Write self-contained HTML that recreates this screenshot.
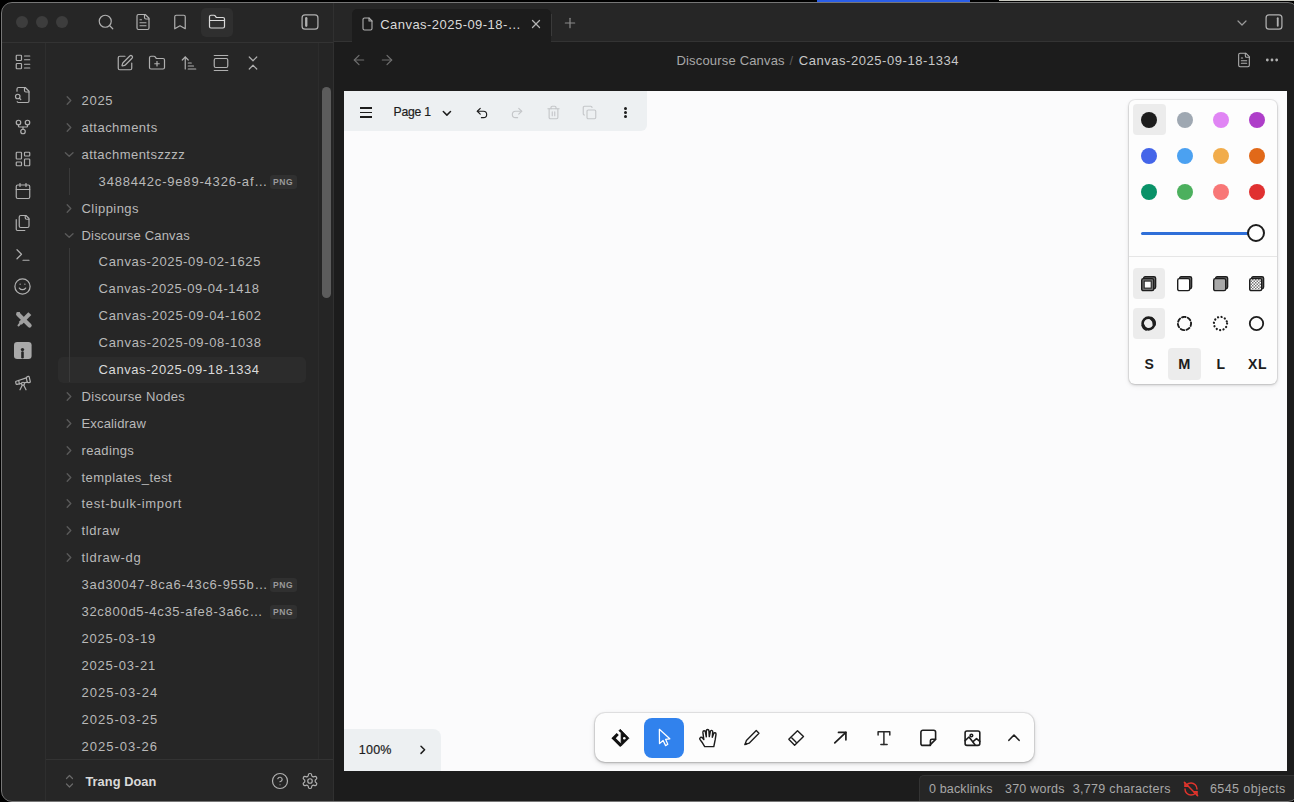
<!DOCTYPE html>
<html><head><meta charset="utf-8">
<style>
*{box-sizing:border-box;margin:0;padding:0}
html,body{width:1294px;height:802px;overflow:hidden;background:#000;font-family:"Liberation Sans",sans-serif}
.abs{position:absolute}
.t{white-space:nowrap;line-height:normal}
svg{display:block;overflow:visible}
#win{position:absolute;left:2px;top:3px;width:1296px;height:798px;border-radius:10px;overflow:hidden;background:#262626}
#frame{position:absolute;left:1px;top:2px;width:1298px;height:800px;border-radius:11px;border:1px solid #767676;pointer-events:none}
.tag{height:14px;width:27px;border-radius:3px;background:#303030;color:#9a9a9a;font-size:8.5px;font-weight:700;line-height:14px;text-align:center;letter-spacing:0.6px}
</style></head><body>
<div class="abs" style="left:817px;top:0;width:153px;height:1.6px;background:#2a5ee8"></div>
<div class="abs" style="left:999px;top:0;width:295px;height:1px;background:#c9c9c0"></div>
<div id="win">
  <div class="abs" style="left:-2px;top:-3px;width:1310px;height:830px">
  <!-- ribbon + sidebar bg -->
  <div class="abs" style="left:0;top:0;width:333px;height:830px;background:#262626"></div>
  <div class="abs" style="left:45px;top:42px;width:1px;height:790px;background:#2e2e2e"></div>
  <div class="abs" style="left:0;top:42px;width:333px;height:1px;background:#333333"></div>
  <div class="abs" style="left:333px;top:0;width:1px;height:830px;background:#303030"></div>
  <!-- scrollbar -->
  <div class="abs" style="left:318px;top:43px;width:15px;height:716px;background:#252525;border-left:1px solid #2c2c2c"></div>
  <div class="abs" style="left:322px;top:86.5px;width:8.5px;height:211.5px;border-radius:4.5px;background:#5c5c5c"></div>
  <!-- profile separator -->
  <div class="abs" style="left:46px;top:759px;width:287px;height:1px;background:#333333"></div>
  <!-- tab bar -->
  <div class="abs" style="left:334px;top:0;width:980px;height:41px;background:#262626"></div>
  <div class="abs" style="left:334px;top:41px;width:980px;height:1px;background:#333333"></div>
  <div class="abs" style="left:352px;top:9px;width:199px;height:33px;border-radius:5px 5px 0 0;background:#1c1c1c"></div>
  <div class="abs" style="left:551px;top:14px;width:1px;height:22px;background:#3a3a3a"></div>
  <!-- main view -->
  <div class="abs" style="left:334px;top:42px;width:980px;height:790px;background:#1c1c1c"></div>
  <!-- canvas -->
  <div class="abs" style="left:344px;top:91px;width:943px;height:680px;background:#fbfbfc;overflow:hidden">
     
  </div>
  <!-- status bar -->
  <div class="abs" style="left:919px;top:775px;width:400px;height:40px;background:#262626;border-radius:5px 0 0 0;border-top:1px solid #333;border-left:1px solid #333"></div>
  </div>
</div>
<div class="abs" style="left:0;top:0;width:1294px;height:802px">
<div class="abs" style="left:16.3px;top:16.3px;width:12px;height:12px;border-radius:50%;background:#3d3d3d"></div>
<div class="abs" style="left:36.0px;top:16.3px;width:12px;height:12px;border-radius:50%;background:#3d3d3d"></div>
<div class="abs" style="left:56.0px;top:16.3px;width:12px;height:12px;border-radius:50%;background:#3d3d3d"></div>
<div class="abs" style="left:201px;top:7.5px;width:32px;height:29.5px;border-radius:5px;background:#2f2f2f"></div>
<svg class="abs" style="left:97.00px;top:13.20px" width="18" height="18" viewBox="0 0 24 24" fill="none" stroke="#b0b0b0" stroke-width="1.6" stroke-linecap="round" stroke-linejoin="round" ><circle cx="11" cy="11" r="8"/><path d="m21 21-4.3-4.3"/></svg>
<svg class="abs" style="left:134.30px;top:13.20px" width="18" height="18" viewBox="0 0 24 24" fill="none" stroke="#b0b0b0" stroke-width="1.6" stroke-linecap="round" stroke-linejoin="round" ><path d="M15 2H6a2 2 0 0 0-2 2v16a2 2 0 0 0 2 2h12a2 2 0 0 0 2-2V7Z"/><path d="M14 2v4a2 2 0 0 0 2 2h4"/><path d="M10 9H8"/><path d="M16 13H8"/><path d="M16 17H8"/></svg>
<svg class="abs" style="left:171.00px;top:13.20px" width="18" height="18" viewBox="0 0 24 24" fill="none" stroke="#b0b0b0" stroke-width="1.6" stroke-linecap="round" stroke-linejoin="round" ><path d="m19 21-7-4-7 4V5a2 2 0 0 1 2-2h10a2 2 0 0 1 2 2v16z"/></svg>
<svg class="abs" style="left:208.00px;top:13.20px" width="18" height="18" viewBox="0 0 24 24" fill="none" stroke="#dadada" stroke-width="1.6" stroke-linecap="round" stroke-linejoin="round" ><path d="M20 20a2 2 0 0 0 2-2V8a2 2 0 0 0-2-2h-7.9a2 2 0 0 1-1.69-.9L9.6 3.9A2 2 0 0 0 7.93 3H4a2 2 0 0 0-2 2v13a2 2 0 0 0 2 2Z"/><path d="M2 10h20"/></svg>
<svg class="abs" style="left:299.80px;top:12.10px" width="20" height="20" viewBox="0 0 24 24" fill="none" stroke="#b0b0b0" stroke-width="1.5" stroke-linecap="round" stroke-linejoin="round" ><rect width="19" height="17" x="2.5" y="3.5" rx="3.5"/><path d="M7.5 7.5v9" stroke-width="2.8"/></svg>
<svg class="abs" style="left:14.00px;top:53.30px" width="18" height="18" viewBox="0 0 24 24" fill="none" stroke="#b0b0b0" stroke-width="1.6" stroke-linecap="round" stroke-linejoin="round" ><rect width="7" height="7" x="3" y="3" rx="1"/><rect width="7" height="7" x="3" y="14" rx="1"/><path d="M14 4h7"/><path d="M14 9h7"/><path d="M14 15h7"/><path d="M14 20h7"/></svg>
<svg class="abs" style="left:14.00px;top:85.50px" width="18" height="18" viewBox="0 0 24 24" fill="none" stroke="#b0b0b0" stroke-width="1.6" stroke-linecap="round" stroke-linejoin="round" ><path d="M14 2v4a2 2 0 0 0 2 2h4"/><path d="M4.268 21a2 2 0 0 0 1.727 1H18a2 2 0 0 0 2-2V7l-5-5H6a2 2 0 0 0-2 2v3"/><path d="m9 18-1.5-1.5"/><circle cx="5" cy="14" r="3"/></svg>
<svg class="abs" style="left:14.00px;top:117.80px" width="18" height="18" viewBox="0 0 24 24" fill="none" stroke="#b0b0b0" stroke-width="1.6" stroke-linecap="round" stroke-linejoin="round" ><circle cx="12" cy="18" r="3"/><circle cx="6" cy="6" r="3"/><circle cx="18" cy="6" r="3"/><path d="M18 9v2c0 .6-.4 1-1 1H7c-.6 0-1-.4-1-1V9"/><path d="M12 12v3"/></svg>
<svg class="abs" style="left:14.00px;top:149.50px" width="18" height="18" viewBox="0 0 24 24" fill="none" stroke="#b0b0b0" stroke-width="1.6" stroke-linecap="round" stroke-linejoin="round" ><rect width="7" height="9" x="3" y="3" rx="1"/><rect width="7" height="5" x="14" y="3" rx="1"/><rect width="7" height="9" x="14" y="12" rx="1"/><rect width="7" height="5" x="3" y="16" rx="1"/></svg>
<svg class="abs" style="left:14.00px;top:181.50px" width="18" height="18" viewBox="0 0 24 24" fill="none" stroke="#b0b0b0" stroke-width="1.6" stroke-linecap="round" stroke-linejoin="round" ><path d="M8 2v4"/><path d="M16 2v4"/><rect width="18" height="18" x="3" y="4" rx="2"/><path d="M3 10h18"/></svg>
<svg class="abs" style="left:14.00px;top:213.80px" width="18" height="18" viewBox="0 0 24 24" fill="none" stroke="#b0b0b0" stroke-width="1.6" stroke-linecap="round" stroke-linejoin="round" ><path d="M20 7h-3a2 2 0 0 1-2-2V2"/><path d="M9 18a2 2 0 0 1-2-2V4a2 2 0 0 1 2-2h7l4 4v10a2 2 0 0 1-2 2Z"/><path d="M3 7.6v12.8A1.6 1.6 0 0 0 4.6 22h9.8"/></svg>
<svg class="abs" style="left:14.00px;top:246.00px" width="18" height="18" viewBox="0 0 24 24" fill="none" stroke="#b0b0b0" stroke-width="1.6" stroke-linecap="round" stroke-linejoin="round" ><polyline points="4 17 10 11 4 5"/><line x1="12" x2="20" y1="19" y2="19"/></svg>
<svg class="abs" style="left:13.40px;top:277.10px" width="19" height="19" viewBox="0 0 24 24" fill="none" stroke="#b0b0b0" stroke-width="1.6" stroke-linecap="round" stroke-linejoin="round" ><circle cx="12" cy="12" r="9.6"/><path d="M8 14s1.5 2 4 2 4-2 4-2"/><path d="M9 9h.01"/><path d="M15 9h.01"/></svg>
<svg class="abs" style="left:10px;top:306px" width="26" height="26" viewBox="0 0 26 26"><path d="M8.2 8.2 L19.6 19.6" stroke="#a0a0a0" stroke-width="4.2" stroke-linecap="round"/><path d="M19.8 7.6 L10.2 17.4" stroke="#a0a0a0" stroke-width="4.2" stroke-linecap="butt"/><path d="M8.6 19.4 L10.6 17" stroke="#a0a0a0" stroke-width="2.2" stroke-linecap="round"/><path d="M6.6 7.0 L9.2 6.8 L9.6 9.6" fill="none" stroke="#a0a0a0" stroke-width="1.6"/></svg>
<svg class="abs" style="left:14.3px;top:342.1px" width="17.6" height="17" viewBox="0 0 17.6 17"><rect width="17.6" height="17" rx="3.2" fill="#a9a9a9"/><circle cx="8.5" cy="7.6" r="1.7" fill="#262626"/><path d="M8.5 10.6 V15.2" stroke="#262626" stroke-width="2.6" stroke-linecap="round"/></svg>
<svg class="abs" style="left:14.00px;top:374.00px" width="18" height="18" viewBox="0 0 24 24" fill="none" stroke="#b0b0b0" stroke-width="1.6" stroke-linecap="round" stroke-linejoin="round" ><path d="m10.065 12.493-6.18 1.318a.934.934 0 0 1-1.108-.702l-.537-2.15a1.07 1.07 0 0 1 .691-1.265l13.504-4.44"/><path d="m13.56 11.747 4.332-.924"/><path d="m16 21-3.105-6.21"/><path d="M16.485 5.94a2 2 0 0 1 1.455-2.425l1.09-.272a1 1 0 0 1 1.212.727l1.515 6.06a1 1 0 0 1-.727 1.213l-1.09.272a2 2 0 0 1-2.425-1.455z"/><path d="m6.158 8.633 1.114 4.456"/><path d="m8 21 3.105-6.21"/><circle cx="12" cy="13" r="2"/></svg>
<svg class="abs" style="left:116.40px;top:53.60px" width="18" height="18" viewBox="0 0 24 24" fill="none" stroke="#b0b0b0" stroke-width="1.6" stroke-linecap="round" stroke-linejoin="round" ><path d="M12 3H5a2 2 0 0 0-2 2v14a2 2 0 0 0 2 2h14a2 2 0 0 0 2-2v-7"/><path d="M18.375 2.625a1 1 0 0 1 3 3l-9.013 9.014a2 2 0 0 1-.853.505l-2.873.84a.5.5 0 0 1-.62-.62l.84-2.873a2 2 0 0 1 .506-.852z"/></svg>
<svg class="abs" style="left:148.20px;top:53.60px" width="18" height="18" viewBox="0 0 24 24" fill="none" stroke="#b0b0b0" stroke-width="1.6" stroke-linecap="round" stroke-linejoin="round" ><path d="M12 10v6"/><path d="M9 13h6"/><path d="M20 20a2 2 0 0 0 2-2V8a2 2 0 0 0-2-2h-7.9a2 2 0 0 1-1.69-.9L9.6 3.9A2 2 0 0 0 7.93 3H4a2 2 0 0 0-2 2v13a2 2 0 0 0 2 2Z"/></svg>
<svg class="abs" style="left:180.00px;top:53.60px" width="18" height="18" viewBox="0 0 24 24" fill="none" stroke="#b0b0b0" stroke-width="1.6" stroke-linecap="round" stroke-linejoin="round" ><path d="m3 8 4-4 4 4"/><path d="M7 4v16"/><path d="M11 12h4"/><path d="M11 16h7"/><path d="M11 20h10"/></svg>
<svg class="abs" style="left:212.00px;top:53.60px" width="18" height="18" viewBox="0 0 24 24" fill="none" stroke="#b0b0b0" stroke-width="1.6" stroke-linecap="round" stroke-linejoin="round" ><path d="M3 2h18"/><rect width="18" height="12" x="3" y="6" rx="2"/><path d="M3 22h18"/></svg>
<svg class="abs" style="left:244.20px;top:53.60px" width="18" height="18" viewBox="0 0 24 24" fill="none" stroke="#b0b0b0" stroke-width="1.6" stroke-linecap="round" stroke-linejoin="round" ><path d="m7 20 5-5 5 5"/><path d="m7 4 5 5 5-5"/></svg>
<div class="abs" style="left:58px;top:357.3px;width:247.5px;height:26px;border-radius:5px;background:#2c2c2c"></div>
<svg class="abs" style="left:0;top:0" width="120" height="802"><path d="M67.2 96.7 l3.6 3.8 l-3.6 3.8" fill="none" stroke="#5a5a5a" stroke-width="1.4" stroke-linecap="round" stroke-linejoin="round"/></svg>
<svg class="abs" style="left:0;top:0" width="120" height="802"><path d="M67.2 123.7 l3.6 3.8 l-3.6 3.8" fill="none" stroke="#5a5a5a" stroke-width="1.4" stroke-linecap="round" stroke-linejoin="round"/></svg>
<svg class="abs" style="left:0;top:0" width="120" height="802"><path d="M65.4 152.7 l3.8 3.6 l3.8 -3.6" fill="none" stroke="#5a5a5a" stroke-width="1.4" stroke-linecap="round" stroke-linejoin="round"/></svg>
<div class="abs tag" style="left:269.5px;top:174.5px">PNG</div>
<svg class="abs" style="left:0;top:0" width="120" height="802"><path d="M67.2 204.7 l3.6 3.8 l-3.6 3.8" fill="none" stroke="#5a5a5a" stroke-width="1.4" stroke-linecap="round" stroke-linejoin="round"/></svg>
<svg class="abs" style="left:0;top:0" width="120" height="802"><path d="M65.4 233.7 l3.8 3.6 l3.8 -3.6" fill="none" stroke="#5a5a5a" stroke-width="1.4" stroke-linecap="round" stroke-linejoin="round"/></svg>
<svg class="abs" style="left:0;top:0" width="120" height="802"><path d="M67.2 392.7 l3.6 3.8 l-3.6 3.8" fill="none" stroke="#5a5a5a" stroke-width="1.4" stroke-linecap="round" stroke-linejoin="round"/></svg>
<svg class="abs" style="left:0;top:0" width="120" height="802"><path d="M67.2 419.7 l3.6 3.8 l-3.6 3.8" fill="none" stroke="#5a5a5a" stroke-width="1.4" stroke-linecap="round" stroke-linejoin="round"/></svg>
<svg class="abs" style="left:0;top:0" width="120" height="802"><path d="M67.2 446.7 l3.6 3.8 l-3.6 3.8" fill="none" stroke="#5a5a5a" stroke-width="1.4" stroke-linecap="round" stroke-linejoin="round"/></svg>
<svg class="abs" style="left:0;top:0" width="120" height="802"><path d="M67.2 473.7 l3.6 3.8 l-3.6 3.8" fill="none" stroke="#5a5a5a" stroke-width="1.4" stroke-linecap="round" stroke-linejoin="round"/></svg>
<svg class="abs" style="left:0;top:0" width="120" height="802"><path d="M67.2 499.7 l3.6 3.8 l-3.6 3.8" fill="none" stroke="#5a5a5a" stroke-width="1.4" stroke-linecap="round" stroke-linejoin="round"/></svg>
<svg class="abs" style="left:0;top:0" width="120" height="802"><path d="M67.2 526.7 l3.6 3.8 l-3.6 3.8" fill="none" stroke="#5a5a5a" stroke-width="1.4" stroke-linecap="round" stroke-linejoin="round"/></svg>
<svg class="abs" style="left:0;top:0" width="120" height="802"><path d="M67.2 553.7 l3.6 3.8 l-3.6 3.8" fill="none" stroke="#5a5a5a" stroke-width="1.4" stroke-linecap="round" stroke-linejoin="round"/></svg>
<div class="abs tag" style="left:269.5px;top:577.5px">PNG</div>
<div class="abs tag" style="left:269.5px;top:604.5px">PNG</div>
<div class="abs" style="left:69px;top:168px;width:1px;height:27px;background:#3a3a3a"></div>
<div class="abs" style="left:69px;top:248px;width:1px;height:134px;background:#3a3a3a"></div>
<svg class="abs" style="left:361.50px;top:17.00px" width="11" height="11" viewBox="0 0 11 11" fill="none" stroke="#b0b0b0" stroke-width="1.1" stroke-linecap="round" stroke-linejoin="round" ><path d="M7 1H2.5a1.5 1.5 0 0 0-1.5 1.5v9a1.5 1.5 0 0 0 1.5 1.5h6a1.5 1.5 0 0 0 1.5-1.5V4Z"/><path d="M7 1v3h3"/></svg>
<svg class="abs" style="left:528.50px;top:17.00px" width="14" height="14" viewBox="0 0 24 24" fill="none" stroke="#b3b3b3" stroke-width="2.2" stroke-linecap="round" stroke-linejoin="round" ><path d="M18 6 6 18"/><path d="m6 6 12 12"/></svg>
<svg class="abs" style="left:562.00px;top:15.00px" width="16" height="16" viewBox="0 0 24 24" fill="none" stroke="#8a8a8a" stroke-width="1.8" stroke-linecap="round" stroke-linejoin="round" ><path d="M5 12h14"/><path d="M12 5v14"/></svg>
<svg class="abs" style="left:1234.00px;top:14.50px" width="16" height="16" viewBox="0 0 24 24" fill="none" stroke="#9a9a9a" stroke-width="1.8" stroke-linecap="round" stroke-linejoin="round" ><path d="m6 9 6 6 6-6"/></svg>
<svg class="abs" style="left:1264.00px;top:12.00px" width="20" height="20" viewBox="0 0 24 24" fill="none" stroke="#b0b0b0" stroke-width="1.5" stroke-linecap="round" stroke-linejoin="round" ><rect width="19" height="17" x="2.5" y="3.5" rx="3.5"/><path d="M16.5 7.5v9" stroke-width="2.2"/></svg>
<svg class="abs" style="left:351.30px;top:52.30px" width="16" height="16" viewBox="0 0 24 24" fill="none" stroke="#6f6f6f" stroke-width="1.8" stroke-linecap="round" stroke-linejoin="round" ><path d="m12 19-7-7 7-7"/><path d="M19 12H5"/></svg>
<svg class="abs" style="left:379.20px;top:52.30px" width="16" height="16" viewBox="0 0 24 24" fill="none" stroke="#6f6f6f" stroke-width="1.8" stroke-linecap="round" stroke-linejoin="round" ><path d="M5 12h14"/><path d="m12 5 7 7-7 7"/></svg>
<svg class="abs" style="left:1236.00px;top:52.30px" width="16" height="16" viewBox="0 0 24 24" fill="none" stroke="#b0b0b0" stroke-width="1.6" stroke-linecap="round" stroke-linejoin="round" ><path d="M15 2H6a2 2 0 0 0-2 2v16a2 2 0 0 0 2 2h12a2 2 0 0 0 2-2V7Z"/><path d="M14 2v4a2 2 0 0 0 2 2h4"/><path d="M10 9H8"/><path d="M16 13H8"/><path d="M16 17H8"/></svg>
<svg class="abs" style="left:1264.00px;top:52.30px" width="16" height="16" viewBox="0 0 24 24" fill="none" stroke="#b0b0b0" stroke-width="2.2" stroke-linecap="round" stroke-linejoin="round" ><circle cx="12" cy="12" r="1"/><circle cx="19" cy="12" r="1"/><circle cx="5" cy="12" r="1"/></svg>
<svg class="abs" style="left:1182.50px;top:780.50px" width="16" height="16" viewBox="0 0 24 24" fill="none" stroke="#e0342c" stroke-width="2.2" stroke-linecap="round" stroke-linejoin="round" ><path d="M21 12a9 9 0 0 0-9-9 9.75 9.75 0 0 0-6.74 2.74L3 8"/><path d="M3 3v5h5"/><path d="M3 12a9 9 0 0 0 9 9 9.75 9.75 0 0 0 6.74-2.74L21 16"/><path d="M16 16h5v5"/><path d="M2 2l20 20"/></svg>
<svg class="abs" style="left:63.50px;top:773.50px" width="11"  fill="none" stroke="#6a6a6a" stroke-width="1.2" stroke-linecap="round" stroke-linejoin="round" height="15" viewBox="0 0 11 15"><path d="M2.5 4.5 L5.5 1.5 L8.5 4.5"/><path d="M2.5 10 L5.5 13 L8.5 10"/></svg>
<svg class="abs" style="left:270.80px;top:772.30px" width="18" height="18" viewBox="0 0 24 24" fill="none" stroke="#b0b0b0" stroke-width="1.6" stroke-linecap="round" stroke-linejoin="round" ><circle cx="12" cy="12" r="10"/><path d="M9.09 9a3 3 0 0 1 5.83 1c0 2-3 3-3 3"/><path d="M12 17h.01"/></svg>
<svg class="abs" style="left:301.00px;top:772.30px" width="18" height="18" viewBox="0 0 24 24" fill="none" stroke="#b0b0b0" stroke-width="1.6" stroke-linecap="round" stroke-linejoin="round" ><path d="M12.22 2h-.44a2 2 0 0 0-2 2v.18a2 2 0 0 1-1 1.73l-.43.25a2 2 0 0 1-2 0l-.15-.08a2 2 0 0 0-2.73.73l-.22.38a2 2 0 0 0 .73 2.73l.15.1a2 2 0 0 1 1 1.72v.51a2 2 0 0 1-1 1.74l-.15.09a2 2 0 0 0-.73 2.73l.22.38a2 2 0 0 0 2.73.73l.15-.08a2 2 0 0 1 2 0l.43.25a2 2 0 0 1 1 1.73V20a2 2 0 0 0 2 2h.44a2 2 0 0 0 2-2v-.18a2 2 0 0 1 1-1.73l.43-.25a2 2 0 0 1 2 0l.15.08a2 2 0 0 0 2.73-.73l.22-.39a2 2 0 0 0-.73-2.73l-.15-.08a2 2 0 0 1-1-1.74v-.5a2 2 0 0 1 1-1.74l.15-.09a2 2 0 0 0 .73-2.73l-.22-.38a2 2 0 0 0-2.73-.73l-.15.08a2 2 0 0 1-2 0l-.43-.25a2 2 0 0 1-1-1.73V4a2 2 0 0 0-2-2z"/><circle cx="12" cy="12" r="3"/></svg>
<div class="abs" style="left:344px;top:91px;width:302.5px;height:40px;background:#edf0f2;border-radius:0 0 6px 0"></div>
<div class="abs" style="left:360px;top:107.3px;width:11.8px;height:1.5px;background:#1d1d1d"></div>
<div class="abs" style="left:360px;top:111.7px;width:11.8px;height:1.5px;background:#1d1d1d"></div>
<div class="abs" style="left:360px;top:116.1px;width:11.8px;height:1.5px;background:#1d1d1d"></div>
<svg class="abs" style="left:442.00px;top:109.80px" width="10" height="10" viewBox="0 0 10 10" fill="none" stroke="#1d1d1d" stroke-width="1.5" stroke-linecap="round" stroke-linejoin="round" ><path d="M1.3 1.5 L4.9 5.1 L8.5 1.5"/></svg>
<svg class="abs" style="left:474.80px;top:105.60px" width="14" height="14" viewBox="0 0 24 24" fill="none" stroke="#1d1d1d" stroke-width="2" stroke-linecap="round" stroke-linejoin="round" ><path d="M9 14 4 9l5-5"/><path d="M4 9h10.5a5.5 5.5 0 0 1 5.5 5.5a5.5 5.5 0 0 1-5.5 5.5H11"/></svg>
<svg class="abs" style="left:510.40px;top:105.60px" width="14" height="14" viewBox="0 0 24 24" fill="none" stroke="#c4c6c9" stroke-width="2" stroke-linecap="round" stroke-linejoin="round" ><path d="m15 14 5-5-5-5"/><path d="M20 9H9.5A5.5 5.5 0 0 0 4 14.5A5.5 5.5 0 0 0 9.5 20H13"/></svg>
<svg class="abs" style="left:546.20px;top:105.10px" width="15" height="15" viewBox="0 0 24 24" fill="none" stroke="#c4c6c9" stroke-width="1.8" stroke-linecap="round" stroke-linejoin="round" ><path d="M3 6h18"/><path d="M19 6v14c0 1-1 2-2 2H7c-1 0-2-1-2-2V6"/><path d="M8 6V4c0-1 1-2 2-2h4c1 0 2 1 2 2v2"/><line x1="10" x2="10" y1="11" y2="17"/><line x1="14" x2="14" y1="11" y2="17"/></svg>
<svg class="abs" style="left:582.00px;top:105.10px" width="15" height="15" viewBox="0 0 24 24" fill="none" stroke="#c4c6c9" stroke-width="1.8" stroke-linecap="round" stroke-linejoin="round" ><rect width="14" height="14" x="8" y="8" rx="2" ry="2"/><path d="M4 16c-1.1 0-2-.9-2-2V4c0-1.1.9-2 2-2h10c1.1 0 2 .9 2 2"/></svg>
<div class="abs" style="left:624.0px;top:107.0px;width:3px;height:3px;border-radius:50%;background:#1d1d1d"></div>
<div class="abs" style="left:624.0px;top:111.2px;width:3px;height:3px;border-radius:50%;background:#1d1d1d"></div>
<div class="abs" style="left:624.0px;top:115.4px;width:3px;height:3px;border-radius:50%;background:#1d1d1d"></div>
<div class="abs" style="left:1128.7px;top:99.5px;width:148.8px;height:284.4px;background:#fdfdfd;border-radius:6px;box-shadow:0 0 0 1px rgba(0,0,0,0.06),0 1px 3px rgba(0,0,0,0.18),0 2px 6px rgba(0,0,0,0.06)"></div>
<div class="abs" style="left:1133px;top:104.3px;width:32.5px;height:31px;border-radius:4px;background:#ececec"></div>
<div class="abs" style="left:1141.1px;top:111.9px;width:16px;height:16px;border-radius:50%;background:#1d1d1d"></div>
<div class="abs" style="left:1177.1px;top:111.9px;width:16px;height:16px;border-radius:50%;background:#9fa8b2"></div>
<div class="abs" style="left:1213.1px;top:111.9px;width:16px;height:16px;border-radius:50%;background:#e085f4"></div>
<div class="abs" style="left:1249.1px;top:111.9px;width:16px;height:16px;border-radius:50%;background:#ae3ec9"></div>
<div class="abs" style="left:1141.1px;top:147.9px;width:16px;height:16px;border-radius:50%;background:#4465e9"></div>
<div class="abs" style="left:1177.1px;top:147.9px;width:16px;height:16px;border-radius:50%;background:#4ba1f1"></div>
<div class="abs" style="left:1213.1px;top:147.9px;width:16px;height:16px;border-radius:50%;background:#f1ac4b"></div>
<div class="abs" style="left:1249.1px;top:147.9px;width:16px;height:16px;border-radius:50%;background:#e16919"></div>
<div class="abs" style="left:1141.1px;top:183.9px;width:16px;height:16px;border-radius:50%;background:#099268"></div>
<div class="abs" style="left:1177.1px;top:183.9px;width:16px;height:16px;border-radius:50%;background:#4cb05e"></div>
<div class="abs" style="left:1213.1px;top:183.9px;width:16px;height:16px;border-radius:50%;background:#f87777"></div>
<div class="abs" style="left:1249.1px;top:183.9px;width:16px;height:16px;border-radius:50%;background:#e03131"></div>
<div class="abs" style="left:1141px;top:231.8px;width:112px;height:3px;border-radius:1.5px;background:#2f6fd8"></div>
<div class="abs" style="left:1247.3px;top:224.4px;width:18px;height:18px;border-radius:50%;background:#fff;border:2px solid #1d1d1d"></div>
<div class="abs" style="left:1129px;top:256px;width:148px;height:1px;background:#e6e6e6"></div>
<div class="abs" style="left:1132.5px;top:268px;width:32.3px;height:31.3px;border-radius:4px;background:#ececec"></div>
<svg width="0" height="0" class="abs"><defs><pattern id="pat" width="3" height="3" patternUnits="userSpaceOnUse"><rect width="3" height="3" fill="#fff"/><rect width="1.5" height="1.5" fill="#777"/><rect x="1.5" y="1.5" width="1.5" height="1.5" fill="#777"/></pattern></defs></svg>
<svg class="abs" style="left:1141.2px;top:276.1px" width="15.5" height="15.5" viewBox="0 0 15.5 15.5"><rect x="2.6" y="0.7" width="12" height="12" rx="1.6" fill="#727272" stroke="#1d1d1d" stroke-width="1.4"/><rect x="0.7" y="2.6" width="12" height="12" rx="1.6" fill="#727272" stroke="#1d1d1d" stroke-width="1.4"/><rect x="3.2" y="5.1" width="7" height="7" fill="#fdfdfd" stroke="#1d1d1d" stroke-width="1"/></svg>
<svg class="abs" style="left:1177.2px;top:276.1px" width="15.5" height="15.5" viewBox="0 0 15.5 15.5"><rect x="2.6" y="0.7" width="12" height="12" rx="1.6" fill="#727272" stroke="#1d1d1d" stroke-width="1.4"/><rect x="0.7" y="2.6" width="12" height="12" rx="1.6" fill="#ffffff" stroke="#1d1d1d" stroke-width="1.4"/></svg>
<svg class="abs" style="left:1213.2px;top:276.1px" width="15.5" height="15.5" viewBox="0 0 15.5 15.5"><rect x="2.6" y="0.7" width="12" height="12" rx="1.6" fill="#727272" stroke="#1d1d1d" stroke-width="1.4"/><rect x="0.7" y="2.6" width="12" height="12" rx="1.6" fill="#a8a8a8" stroke="#1d1d1d" stroke-width="1.4"/></svg>
<svg class="abs" style="left:1249.2px;top:276.1px" width="15.5" height="15.5" viewBox="0 0 15.5 15.5"><rect x="2.6" y="0.7" width="12" height="12" rx="1.6" fill="#727272" stroke="#1d1d1d" stroke-width="1.4"/><rect x="0.7" y="2.6" width="12" height="12" rx="1.6" fill="url(#pat)" stroke="#1d1d1d" stroke-width="1.4"/></svg>
<div class="abs" style="left:1132.5px;top:308px;width:32.3px;height:31.3px;border-radius:4px;background:#ececec"></div>
<svg class="abs" style="left:1141.30px;top:316.00px" width="15" height="15" viewBox="0 0 15 15" fill="none" stroke="#1d1d1d" stroke-width="1.6" stroke-linecap="round" stroke-linejoin="round" ><circle cx="7.5" cy="7.5" r="5.9" stroke-width="2.6"/><path d="M10.6 2.6 a5.9 5.9 0 0 1 2.6 5.6" stroke-width="3.4"/><path d="M2 9.5 a5.9 5.9 0 0 0 3 3.6" stroke-width="3.2"/></svg>
<svg class="abs" style="left:1177.30px;top:316.00px" width="15" height="15" viewBox="0 0 15 15" fill="none" stroke="#1d1d1d" stroke-width="1.9" stroke-linecap="round" stroke-linejoin="round" ><circle cx="7.5" cy="7.5" r="6.6" stroke-dasharray="3.6 2.3" transform="rotate(-10 7.5 7.5)"/></svg>
<svg class="abs" style="left:1213.30px;top:316.00px" width="15" height="15" viewBox="0 0 15 15" fill="none" stroke="#1d1d1d" stroke-width="1.8" stroke-linecap="round" stroke-linejoin="round" ><circle cx="7.5" cy="7.5" r="6.6" stroke-dasharray="0.1 3.45" stroke-width="2.2"/></svg>
<svg class="abs" style="left:1249.30px;top:316.00px" width="15" height="15" viewBox="0 0 15 15" fill="none" stroke="#1d1d1d" stroke-width="1.8" stroke-linecap="round" stroke-linejoin="round" ><circle cx="7.5" cy="7.5" r="6.7"/></svg>
<div class="abs" style="left:1168.3px;top:348px;width:32.7px;height:31.6px;border-radius:4px;background:#ececec"></div>
<div class="abs" style="left:344px;top:729px;width:97px;height:42px;background:#edf0f2;border-radius:0 8px 0 0"></div>
<svg class="abs" style="left:418.50px;top:744.50px" width="10" height="10" viewBox="0 0 10 10" fill="none" stroke="#1d1d1d" stroke-width="1.5" stroke-linecap="round" stroke-linejoin="round" ><path d="M2 1.2 L5.6 4.8 L2 8.4"/></svg>
<div class="abs" style="left:595.3px;top:713.3px;width:438.7px;height:48.5px;background:#fdfdfd;border-radius:10px;box-shadow:0 0 0 1px rgba(0,0,0,0.07),0 1px 3px rgba(0,0,0,0.22),0 2px 6px rgba(0,0,0,0.1)"></div>
<div class="abs" style="left:644.2px;top:717.8px;width:39.8px;height:40px;background:#3182ed;border-radius:8px"></div>
<svg class="abs" style="left:607.8px;top:725.9px" width="24" height="24" viewBox="0 0 24 24"><path d="M8.7 7.0 L3.4 12.2 L12.2 21 L13.1 20.1 L13.1 17.55 L7.75 12.2 L10.8 9.1 Z" fill="#111"/><path d="M11.0 4.6 L12.3 3.3 L21 12.2 L13.1 20.1 L13.1 6.4 L11.6 5.6 Z" fill="#111" stroke="#111" stroke-width="0.7" stroke-linejoin="round"/><circle cx="16.3" cy="12.2" r="1.3" fill="#fdfdfd"/></svg>
<svg class="abs" style="left:650px;top:722px" width="30" height="30" viewBox="0 0 30 30"><path d="M9.35 7.3 L19.8 16.8 L15.6 17.3 L17.8 22.2 L15.6 23.6 L13.1 18.5 L9.5 21.6 Z" fill="none" stroke="#fff" stroke-width="1.25" stroke-linejoin="round"/></svg>
<svg class="abs" style="left:699px;top:729px" width="19" height="19" viewBox="0 0 19 19"><path d="M5.7 17.6 L3.0 13.2 L0.9 10.4 Q0.3 9.2 1.4 8.5 Q2.6 7.9 3.6 9.0 L4.8 10.6 L3.9 3.4 Q3.8 2.0 5.0 1.8 Q6.2 1.7 6.4 3.0 L7.3 7.8 L7.3 1.6 Q7.4 0.5 8.6 0.5 Q9.8 0.5 9.9 1.6 L10.3 7.6 L11.3 2.5 Q11.6 1.3 12.7 1.4 Q13.8 1.6 13.7 2.8 L13.3 8.3 L14.6 4.7 Q15.1 3.6 16.1 3.8 Q17.2 4.1 17.0 5.3 L16.2 10.7 L14.8 17.6 Z" fill="none" stroke="#1d1d1d" stroke-width="1.45" stroke-linejoin="round"/></svg>
<svg class="abs" style="left:744px;top:730px" width="17" height="17" viewBox="0 0 17 17"><path d="M12.25 0.56 L14.95 3.24 L5.11 13.17 L0.95 14.67 L2.41 10.49 Z" fill="none" stroke="#1d1d1d" stroke-width="1.35" stroke-linejoin="round"/><path d="M0.9 14.7 L1.6 12.7 L2.9 14.0 Z" fill="#1d1d1d" stroke="#1d1d1d" stroke-width="1"/></svg>
<svg class="abs" style="left:788px;top:730px" width="17" height="17" viewBox="0 0 17 17"><path d="M9.5 0.7 L15.5 6.6 L6.9 15.1 Q6.7 15.3 6.4 15.1 L1.0 9.6 Q0.7 9.3 1.0 9.0 Z" fill="none" stroke="#1d1d1d" stroke-width="1.4" stroke-linejoin="round"/><path d="M3.4 7.5 L8.6 12.7" stroke="#1d1d1d" stroke-width="1.4"/></svg>
<svg class="abs" style="left:828px;top:725px" width="30" height="30" viewBox="0 0 30 30" fill="none" stroke="#1d1d1d" stroke-width="1.7" stroke-linecap="round" stroke-linejoin="round"><path d="M6.8 17.9 L17.9 7.4"/><path d="M10.5 7.4 H17.9 V14.8"/></svg>
<svg class="abs" style="left:872px;top:725px" width="24" height="24" viewBox="0 0 24 24" fill="none" stroke="#2a2a2a" stroke-width="1.5" stroke-linecap="round" stroke-linejoin="round"><path d="M6.1 9.9 V6.8 H17.8 V9.9"/><path d="M11.9 6.8 V19.5"/><path d="M8.9 19.5 H15.1"/></svg>
<svg class="abs" style="left:918px;top:728px" width="20" height="20" viewBox="0 0 20 20" fill="none" stroke="#1d1d1d" stroke-width="1.6" stroke-linecap="round" stroke-linejoin="round"><path d="M2.9 4.2 a2 2 0 0 1 2-2 h10.7 a2 2 0 0 1 2 2 v7.2 l-6 6 h-6.7 a2 2 0 0 1 -2 -2 z"/><path d="M17.5 11.2 h-3.6 a1.5 1.5 0 0 0 -1.5 1.5 v4.7"/></svg>
<svg class="abs" style="left:962px;top:728px" width="20" height="20" viewBox="0 0 20 20" fill="none" stroke="#1d1d1d" stroke-width="1.6" stroke-linecap="round" stroke-linejoin="round"><rect x="3.1" y="3" width="14.7" height="14.4" rx="1.8"/><circle cx="9.4" cy="7.5" r="1.3"/><path d="M3.1 12.6 L7 9 L13 16.8"/><path d="M11 13.6 L14.5 10.6 L17.8 13.4"/></svg>
<svg class="abs" style="left:1006px;top:730px" width="16" height="16" viewBox="0 0 16 16" fill="none" stroke="#1d1d1d" stroke-width="1.6" stroke-linecap="round" stroke-linejoin="round"><path d="M2.9 10.3 L8 5 L13.1 10.3"/></svg>
<div id="r0" class="abs t" style="left:81.50px;top:93.00px;font-size:13px;font-weight:400;color:#b9b9b9;letter-spacing:0.726px;">2025</div>
<div id="r1" class="abs t" style="left:81.50px;top:120.00px;font-size:13px;font-weight:400;color:#b9b9b9;letter-spacing:0.487px;">attachments</div>
<div id="r2" class="abs t" style="left:81.50px;top:147.00px;font-size:13px;font-weight:400;color:#b9b9b9;letter-spacing:0.462px;">attachmentszzzz</div>
<div id="r3" class="abs t" style="left:98.60px;top:174.00px;font-size:13px;font-weight:400;color:#b9b9b9;letter-spacing:0.806px;">3488442c-9e89-4326-af…</div>
<div id="r4" class="abs t" style="left:81.50px;top:201.00px;font-size:13px;font-weight:400;color:#b9b9b9;letter-spacing:0.439px;">Clippings</div>
<div id="r5" class="abs t" style="left:81.50px;top:228.00px;font-size:13px;font-weight:400;color:#b9b9b9;letter-spacing:0.180px;">Discourse Canvas</div>
<div id="r6" class="abs t" style="left:98.60px;top:254.00px;font-size:13px;font-weight:400;color:#b9b9b9;letter-spacing:0.650px;">Canvas-2025-09-02-1625</div>
<div id="r7" class="abs t" style="left:98.60px;top:281.00px;font-size:13px;font-weight:400;color:#b9b9b9;letter-spacing:0.583px;">Canvas-2025-09-04-1418</div>
<div id="r8" class="abs t" style="left:98.60px;top:308.00px;font-size:13px;font-weight:400;color:#b9b9b9;letter-spacing:0.678px;">Canvas-2025-09-04-1602</div>
<div id="r9" class="abs t" style="left:98.60px;top:335.00px;font-size:13px;font-weight:400;color:#b9b9b9;letter-spacing:0.678px;">Canvas-2025-09-08-1038</div>
<div id="r10" class="abs t" style="left:98.60px;top:362.00px;font-size:13px;font-weight:400;color:#dadada;letter-spacing:0.583px;">Canvas-2025-09-18-1334</div>
<div id="r11" class="abs t" style="left:81.50px;top:389.00px;font-size:13px;font-weight:400;color:#b9b9b9;letter-spacing:0.307px;">Discourse Nodes</div>
<div id="r12" class="abs t" style="left:81.50px;top:416.00px;font-size:13px;font-weight:400;color:#b9b9b9;letter-spacing:0.160px;">Excalidraw</div>
<div id="r13" class="abs t" style="left:81.50px;top:443.00px;font-size:13px;font-weight:400;color:#b9b9b9;letter-spacing:0.346px;">readings</div>
<div id="r14" class="abs t" style="left:81.50px;top:470.00px;font-size:13px;font-weight:400;color:#b9b9b9;letter-spacing:0.435px;">templates_test</div>
<div id="r15" class="abs t" style="left:81.50px;top:496.00px;font-size:13px;font-weight:400;color:#b9b9b9;letter-spacing:0.681px;">test-bulk-import</div>
<div id="r16" class="abs t" style="left:81.50px;top:523.00px;font-size:13px;font-weight:400;color:#b9b9b9;letter-spacing:0.622px;">tldraw</div>
<div id="r17" class="abs t" style="left:81.50px;top:550.00px;font-size:13px;font-weight:400;color:#b9b9b9;letter-spacing:0.729px;">tldraw-dg</div>
<div id="r18" class="abs t" style="left:81.50px;top:577.00px;font-size:13px;font-weight:400;color:#b9b9b9;letter-spacing:0.733px;">3ad30047-8ca6-43c6-955b…</div>
<div id="r19" class="abs t" style="left:81.50px;top:604.00px;font-size:13px;font-weight:400;color:#b9b9b9;letter-spacing:0.705px;">32c800d5-4c35-afe8-3a6c…</div>
<div id="r20" class="abs t" style="left:81.50px;top:631.00px;font-size:13px;font-weight:400;color:#b9b9b9;letter-spacing:0.800px;">2025-03-19</div>
<div id="r21" class="abs t" style="left:81.50px;top:658.00px;font-size:13px;font-weight:400;color:#b9b9b9;letter-spacing:0.800px;">2025-03-21</div>
<div id="r22" class="abs t" style="left:81.50px;top:685.00px;font-size:13px;font-weight:400;color:#b9b9b9;letter-spacing:1.022px;">2025-03-24</div>
<div id="r23" class="abs t" style="left:81.50px;top:712.00px;font-size:13px;font-weight:400;color:#b9b9b9;letter-spacing:1.022px;">2025-03-25</div>
<div id="r24" class="abs t" style="left:81.50px;top:739.00px;font-size:13px;font-weight:400;color:#b9b9b9;letter-spacing:1.000px;">2025-03-26</div>
<div id="prof" class="abs t" style="left:85.40px;top:774.00px;font-size:12.8px;font-weight:700;color:#dadada;letter-spacing:0.057px;">Trang Doan</div>
<div id="tabt" class="abs t" style="left:380.20px;top:17.00px;font-size:13px;font-weight:400;color:#dadada;letter-spacing:0.465px;">Canvas-2025-09-18-…</div>
<div id="bc1" class="abs t" style="left:676.50px;top:53.00px;font-size:13px;font-weight:400;color:#a8a8a8;letter-spacing:0.173px;">Discourse Canvas</div>
<div id="bcs" class="abs t" style="left:789.40px;top:53.00px;font-size:13px;font-weight:400;color:#5a5a5a;letter-spacing:0.000px;">/</div>
<div id="bc2" class="abs t" style="left:798.70px;top:53.00px;font-size:13px;font-weight:400;color:#c8c8c8;letter-spacing:0.554px;">Canvas-2025-09-18-1334</div>
<div id="sb1" class="abs t" style="left:928.90px;top:782.00px;font-size:12.5px;font-weight:400;color:#a8a8a8;letter-spacing:0.166px;">0 backlinks</div>
<div id="sb2" class="abs t" style="left:1005.00px;top:782.00px;font-size:12.5px;font-weight:400;color:#a8a8a8;letter-spacing:0.227px;">370 words</div>
<div id="sb3" class="abs t" style="left:1072.70px;top:782.00px;font-size:12.5px;font-weight:400;color:#a8a8a8;letter-spacing:0.313px;">3,779 characters</div>
<div id="sb4" class="abs t" style="left:1210.00px;top:782.00px;font-size:12.5px;font-weight:400;color:#a8a8a8;letter-spacing:0.401px;">6545 objects</div>
<div id="page1" class="abs t" style="left:393.50px;top:105.00px;font-size:12.2px;font-weight:400;color:#1d1d1d;letter-spacing:-0.228px;-webkit-text-stroke:0.2px #1d1d1d;">Page 1</div>
<div id="szS" class="abs t" style="left:1144.60px;top:356.00px;font-size:14px;font-weight:700;color:#1d1d1d;letter-spacing:0.000px;">S</div>
<div id="szM" class="abs t" style="left:1178.20px;top:356.00px;font-size:14.5px;font-weight:700;color:#1d1d1d;letter-spacing:0.000px;">M</div>
<div id="szL" class="abs t" style="left:1216.60px;top:356.00px;font-size:14px;font-weight:700;color:#1d1d1d;letter-spacing:0.000px;">L</div>
<div id="szXL" class="abs t" style="left:1248.00px;top:356.00px;font-size:14px;font-weight:700;color:#1d1d1d;letter-spacing:0.709px;">XL</div>
<div id="zoom" class="abs t" style="left:358.70px;top:743.00px;font-size:12.5px;font-weight:400;color:#1d1d1d;letter-spacing:0.272px;-webkit-text-stroke:0.2px #1d1d1d;">100%</div>
</div>
<div id="frame"></div>
</body></html>
